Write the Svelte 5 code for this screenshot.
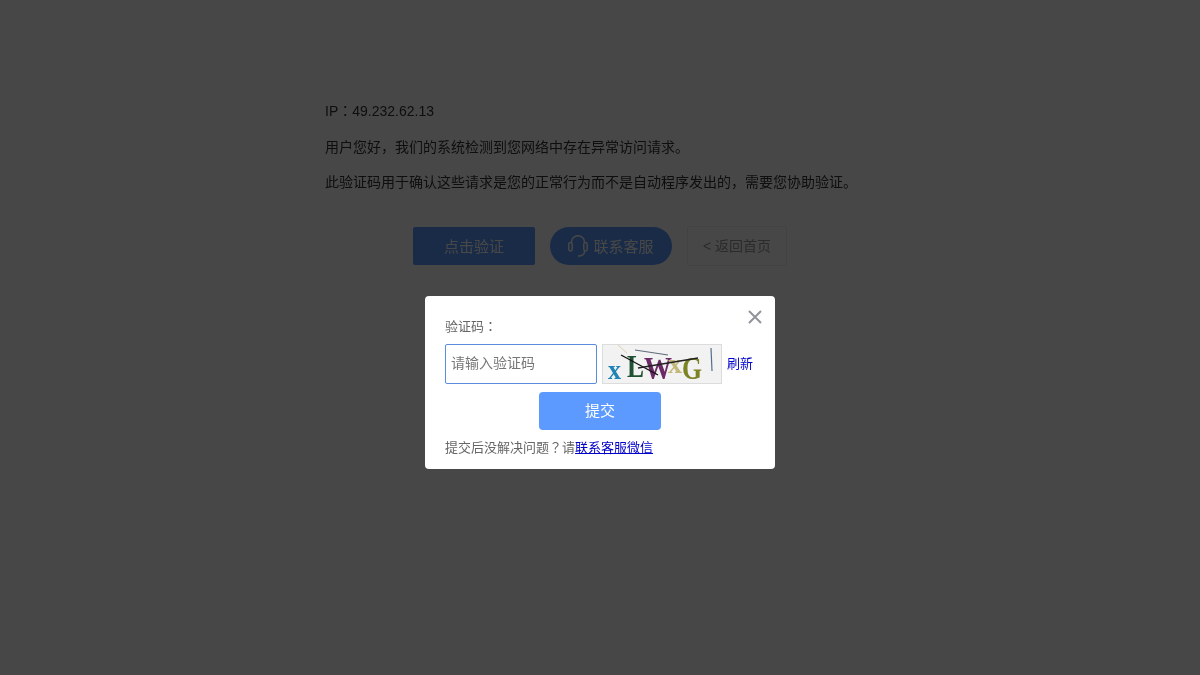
<script>
  let code = $state('');
</script>

<div class="page">
  <main class="content">
    <p class="ip">IP<span class="mark">：</span>49.232.62.13</p>
    <p>用户您好，我们的系统检测到您网络中存在异常访问请求。</p>
    <p>此验证码用于确认这些请求是您的正常行为而不是自动程序发出的，需要您协助验证。</p>
    <div class="actions">
      <button class="verify">点击验证</button>
      <button class="service">
        <svg width="20" height="22" viewBox="0 0 20 22" fill="none" stroke="currentColor" stroke-width="1.5" stroke-linecap="round">
          <path d="M3.500 7.500V7a6.500 6.300 0 0 1 13 0v.5" />
          <rect x="0.800" y="7.500" width="3.400" height="8.500" rx="1.700" />
          <rect x="15.800" y="7.500" width="3.400" height="8.500" rx="1.700" />
          <path d="M16.500 16.500c0 2.800-2.800 4.500-6 4.500" />
        </svg>
        <span>联系客服</span>
      </button>
      <button class="home">&lt; 返回首页</button>
    </div>
  </main>
</div>

<div class="overlay">
  <section class="dialog">
    <button class="close" aria-label="关闭">
      <svg width="14" height="14" viewBox="0 0 14 14" stroke="#909399" stroke-width="2" fill="none">
        <path d="M1 1l12 12M13 1L1 13" />
      </svg>
    </button>
    <div class="label">验证码<span class="mark">：</span></div>
    <div class="row">
      <input bind:value={code} placeholder="请输入验证码" />
      <svg class="captcha" width="120" height="40" viewBox="0 0 120 40">
        <rect x="0.500" y="0.500" width="119" height="39" fill="#f2f2f2" stroke="#dcdcdc" />
        <text x="6" y="35" class="cap" font-size="27" textLength="13" lengthAdjust="spacingAndGlyphs" fill="#1f83b3">x</text>
        <text x="25" y="33" class="cap" font-size="31" textLength="17" lengthAdjust="spacingAndGlyphs" fill="#1f5132">L</text>
        <text x="42" y="35" class="cap" font-size="31" textLength="28" lengthAdjust="spacingAndGlyphs" fill="#6b2a66">W</text>
        <text x="66" y="29" class="cap" font-size="27" textLength="14" lengthAdjust="spacingAndGlyphs" fill="#c3b77a">x</text>
        <text x="80" y="35" class="cap" font-size="31" textLength="20" lengthAdjust="spacingAndGlyphs" fill="#7b8323">G</text>
        <path d="M19 11L56 31" stroke="#111" stroke-width="1.300" fill="none" />
        <path d="M36 24L96 14" stroke="#222" stroke-width="1.300" fill="none" />
        <path d="M33 6L66 11" stroke="#5f6b78" stroke-width="1.100" fill="none" />
        <path d="M16 1L25 9" stroke="#d8d2b0" stroke-width="1" fill="none" />
        <path d="M109 4L110 27" stroke="#4f6f8c" stroke-width="1.200" fill="none" />
      </svg>
      <a class="refresh" href="#refresh">刷新</a>
    </div>
    <button class="submit">提交</button>
    <div class="help">提交后没解决问题<span class="mark">？</span>请<a href="#wechat">联系客服微信</a></div>
  </section>
</div>

<style>
  :global(body) {
    margin: 0;
    background: #fff;
    font-family: "Liberation Sans", "Noto Sans CJK SC", sans-serif;
  }
  .mark {
    font-family: "Noto Sans CJK TC", sans-serif;
    line-height: 0;
  }
  .page {
    height: 675px;
    overflow: hidden;
    will-change: transform;
  }
  .content {
    width: 550px;
    margin: 0 auto;
    padding-top: 100px;
    font-size: 14px;
    line-height: 22px;
    color: #333;
  }
  p {
    margin: 0 0 13.500px;
    white-space: nowrap;
  }
  .actions {
    display: flex;
    justify-content: center;
    align-items: center;
    gap: 15px;
    margin-top: 33px;
  }
  button {
    font-family: inherit;
    cursor: pointer;
  }
  .verify, .service {
    width: 122px;
    height: 38px;
    border: 0;
    background: #5c9aff;
    color: #fff;
    font-size: 15px;
    padding: 0 0 2px;
  }
  .verify {
    border-radius: 2px;
  }
  .service {
    border-radius: 19px;
    display: flex;
    align-items: center;
    justify-content: center;
    gap: 5px;
  }
  .service svg {
    margin-top: 2px;
  }
  .home {
    width: 100px;
    height: 40px;
    background: #fff;
    border: 1px solid #eee;
    border-radius: 2px;
    color: #999;
    font-size: 14px;
    padding: 0 0 2px;
  }
  .overlay {
    position: fixed;
    inset: 0;
    background: rgba(0, 0, 0, 0.72);
    display: flex;
    justify-content: center;
    align-items: flex-start;
    padding-top: 296px;
    will-change: transform;
  }
  .dialog {
    position: relative;
    box-sizing: border-box;
    width: 350px;
    height: 173px;
    background: #fff;
    border-radius: 4px;
    padding: 21px 20px 20px;
    color: #666;
    font-size: 13px;
  }
  .close {
    position: absolute;
    top: 14px;
    right: 13px;
    border: 0;
    background: none;
    padding: 0;
    display: flex;
  }
  .label {
    line-height: 20px;
    height: 20px;
    margin-bottom: 7px;
  }
  .row {
    display: flex;
    align-items: center;
  }
  input {
    box-sizing: border-box;
    width: 152px;
    height: 40px;
    border: 1px solid #5a8de0;
    border-radius: 2px;
    padding: 0 4px 2px 5px;
    font-family: inherit;
    font-size: 14px;
    outline: none;
    color: #333;
  }
  input::placeholder {
    color: #777;
  }
  .captcha {
    margin-left: 5px;
    display: block;
  }
  .cap {
    font-family: "Liberation Serif", serif;
    font-weight: 700;
  }
  .refresh {
    margin-left: 5px;
    padding-bottom: 4px;
    color: #0000cc;
    text-decoration: none;
    font-size: 13px;
  }
  .submit {
    display: block;
    width: 122px;
    height: 38px;
    margin: 8px auto 0;
    border: 0;
    border-radius: 4px;
    background: #5c9aff;
    color: #fff;
    font-size: 15px;
    padding: 0 0 4px;
  }
  .help {
    margin-top: 8px;
    line-height: 20px;
  }
  .help a {
    color: #0000cc;
    text-decoration: underline;
  }
</style>
